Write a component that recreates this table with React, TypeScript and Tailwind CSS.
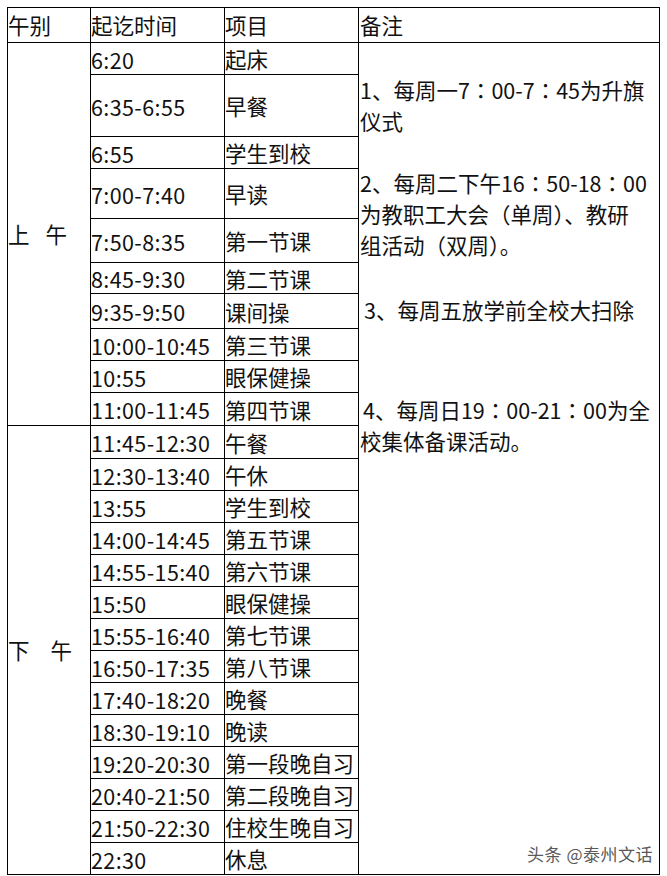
const morning: [string, string][] = [
  ['6:20', '起床'],
  ['6:35-6:55', '早餐'],
  ['6:55', '学生到校'],
  ['7:00-7:40', '早读'],
  ['7:50-8:35', '第一节课'],
  ['8:45-9:30', '第二节课'],
  ['9:35-9:50', '课间操'],
  ['10:00-10:45', '第三节课'],
  ['10:55', '眼保健操'],
  ['11:00-11:45', '第四节课'],
];

const afternoon: [string, string][] = [
  ['11:45-12:30', '午餐'],
  ['12:30-13:40', '午休'],
  ['13:55', '学生到校'],
  ['14:00-14:45', '第五节课'],
  ['14:55-15:40', '第六节课'],
  ['15:50', '眼保健操'],
  ['15:55-16:40', '第七节课'],
  ['16:50-17:35', '第八节课'],
  ['17:40-18:20', '晚餐'],
  ['18:30-19:10', '晚读'],
  ['19:20-20:30', '第一段晚自习'],
  ['20:40-21:50', '第二段晚自习'],
  ['21:50-22:30', '住校生晚自习'],
  ['22:30', '休息'],
];

const cell = 'flex items-center border-r border-b border-black whitespace-nowrap overflow-hidden';

// full-width colon drawn centred, as in the source document
const C = () => <span style={{ fontFamily: '"Noto Sans CJK TC", sans-serif' }}>：</span>;

export default function App() {
  return (
    <div
      className="min-h-[876px] w-[667px] bg-white pt-[7px] pl-[7px] text-[#111] text-[21.5px] leading-none"
      style={{ fontFamily: '"Noto Sans CJK SC", "Noto Sans", sans-serif' }}
    >
      <div className="grid w-[653px] grid-cols-[83px_134px_134px_301px] grid-rows-[35px_32px_62px_32px_50px_44px_31px_35px_32px_32px_33px_33px_32px_32px_32px_32px_32px_32px_32px_32px_32px_32px_32px_32px_32px] border-l border-t border-black">
        <div className={cell}>午别</div>
        <div className={cell}>起讫时间</div>
        <div className={cell}>项目</div>
        <div className={`${cell} pl-[1px]`}>备注</div>

        <div className={`${cell} row-span-10`}>
          <span>上</span>
          <span className="ml-[16px]">午</span>
        </div>
        {morning.map(([time, item], i) => (
          <Row key={time + item} time={time} item={item} first={i === 0} />
        ))}
        <div className={`${cell} row-span-14 row-start-12 col-start-1`}>
          <span>下</span>
          <span className="ml-[21px]">午</span>
        </div>
        {afternoon.map(([time, item]) => (
          <Row key={time + item} time={time} item={item} />
        ))}
      </div>
    </div>
  );
}

function Row({ time, item, first }: { time: string; item: string; first?: boolean }) {
  return (
    <>
      <div className={`${cell} pt-[2px] tracking-[0.4px]`}>{time}</div>
      <div className={`${cell} pt-[1px]`}>{item}</div>
      {first && <Remarks />}
    </>
  );
}

function Remarks() {
  return (
    <div className="relative col-start-4 row-span-24 row-start-2 border-r border-b border-black pl-[1px] pt-[31px] leading-[31px] whitespace-nowrap">
      <p>1、每周一7<C />00-7<C />45为升旗</p>
      <p>仪式</p>
      <p className="mt-[31px]">2、每周二下午16<C />50-18<C />00</p>
      <p>为教职工大会（单周）、教研</p>
      <p>组活动（双周）。</p>
      <p className="mt-[34px] pl-[4px]">3、每周五放学前全校大扫除</p>
      <p className="mt-[69px] pl-[3px]">4、每周日19<C />00-21<C />00为全</p>
      <p>校集体备课活动。</p>
      <span className="absolute right-[6px] bottom-[12px] text-[17px] leading-none tracking-[0.5px] text-[#5a5a5a] [text-shadow:0_0_2px_#fff]">
        头条 @泰州文话
      </span>
    </div>
  );
}
